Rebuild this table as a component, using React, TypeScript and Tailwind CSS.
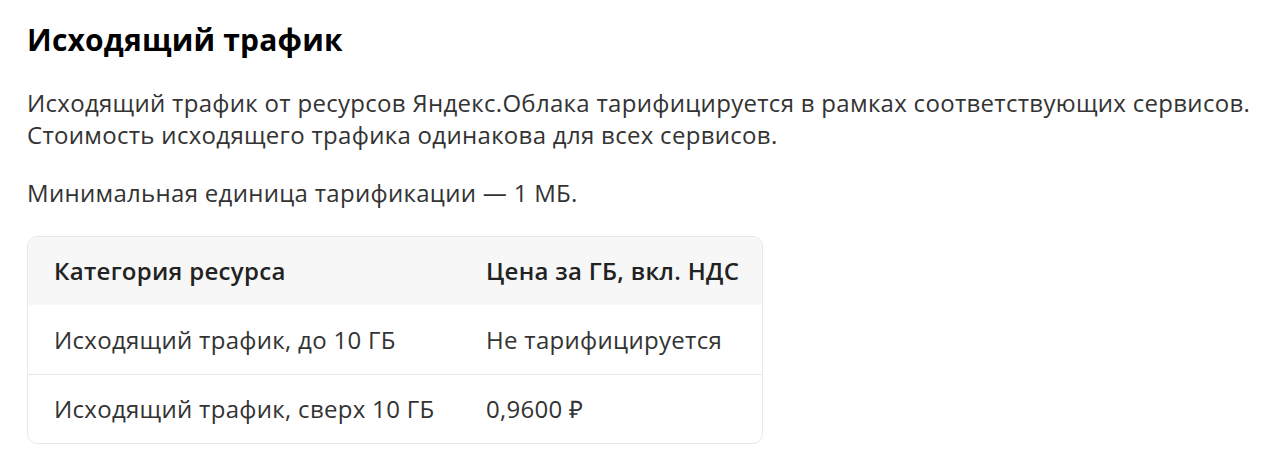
const rows = [
  { name: 'Исходящий трафик, до 10 ГБ', price: 'Не тарифицируется' },
  { name: 'Исходящий трафик, сверх 10 ГБ', price: '0,9600 ₽' },
];

export default function App() {
  return (
    <div className="min-h-[467px] bg-white px-[27px] pt-[20px] font-['Open_Sans',sans-serif] text-[#333]">
      <h2 className="text-[30px] font-bold leading-[40px] tracking-[0.2px] text-black">Исходящий трафик</h2>

      <p className="mt-[27px] text-[24px] leading-[32px] tracking-[0.3px]">
        Исходящий трафик от ресурсов Яндекс.Облака тарифицируется в рамках соответствующих сервисов.
        <br />
        Стоимость исходящего трафика одинакова для всех сервисов.
      </p>

      <p className="mt-[26px] text-[24px] leading-[32px] tracking-[0.3px]">Минимальная единица тарификации — 1 МБ.</p>

      <div className="mt-[27px] w-[736px] overflow-hidden rounded-[10px] border border-[#e8e8e8] text-[24px] tracking-[0.3px]">
        <div className="flex h-[68px] items-center bg-[#f7f7f7] font-semibold text-[#222]">
          <div className="w-[458px] pl-[26px]">Категория ресурса</div>
          <div>Цена за ГБ, вкл. НДС</div>
        </div>
        {rows.map((row, i) => (
          <div
            key={row.name}
            className={`flex h-[69px] items-center ${i > 0 ? 'border-t border-[#e8e8e8]' : ''}`}
          >
            <div className="w-[458px] pl-[26px]">{row.name}</div>
            <div>{row.price}</div>
          </div>
        ))}
      </div>
    </div>
  );
}
